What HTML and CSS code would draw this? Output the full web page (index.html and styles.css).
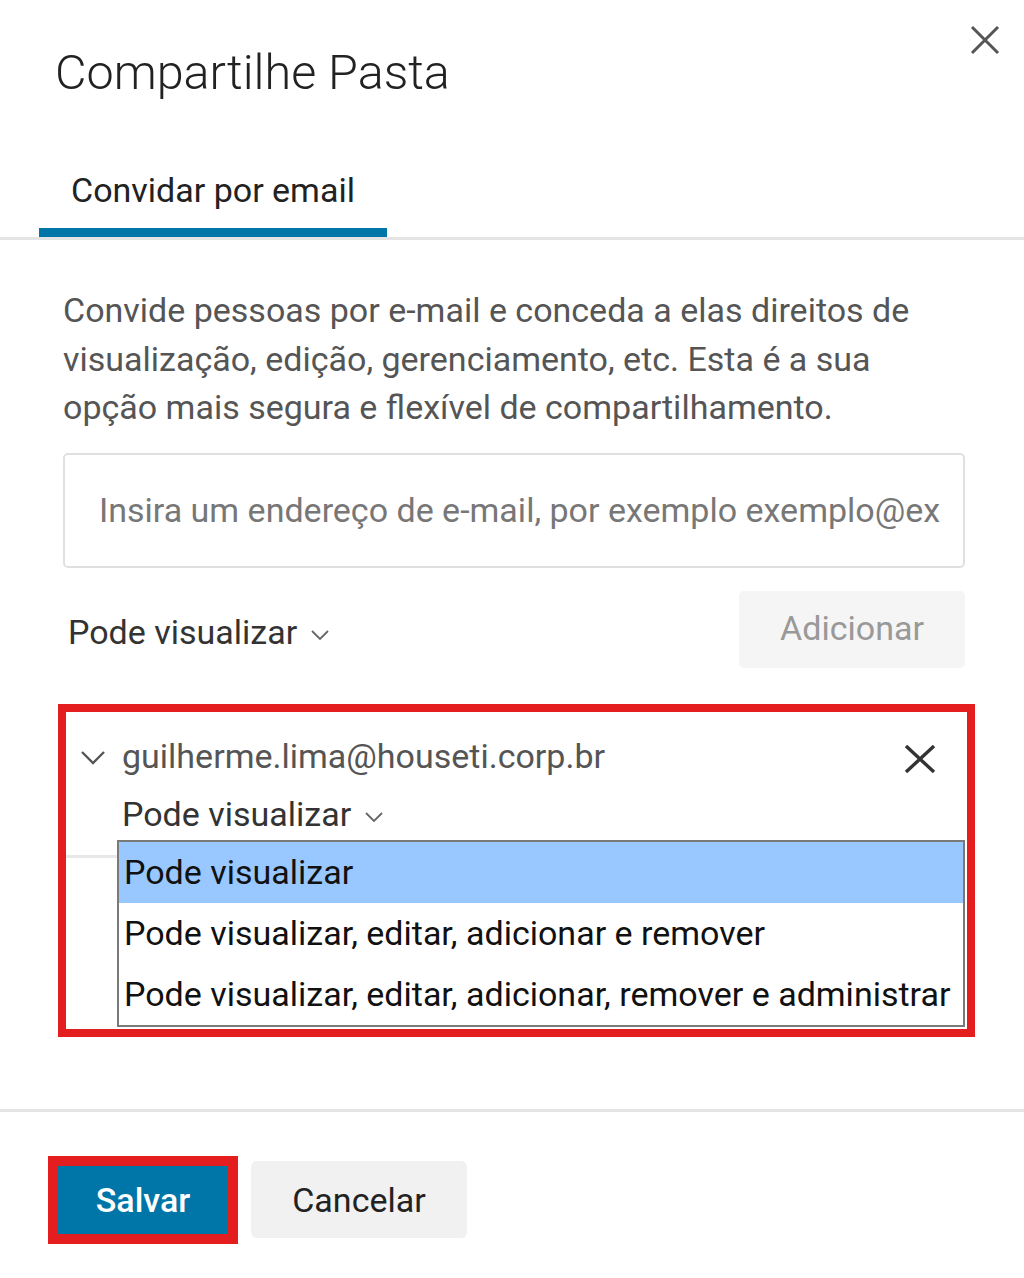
FILE: index.html
```html
<!DOCTYPE html>
<html lang="pt-BR">
<head>
<meta charset="utf-8">
<title>Compartilhe Pasta</title>
<link rel="stylesheet" href="styles.css">
</head>
<body>
<div class="dialog">
  <header class="dialog-header">
    <h1 class="dialog-title">Compartilhe Pasta</h1>
    <button class="close-btn" aria-label="Fechar">
      <svg width="30" height="30" viewBox="0 0 30 30"><path d="M2 2 L28 28 M28 2 L2 28" stroke="#555" stroke-width="3" fill="none"/></svg>
    </button>
  </header>

  <nav class="tabs">
    <div class="tab active">Convidar por email</div>
  </nav>

  <section class="dialog-body">
    <p class="intro">Convide pessoas por e-mail e conceda a elas direitos de visualização, edição, gerenciamento, etc. Esta é a sua opção mais segura e flexível de compartilhamento.</p>

    <div class="email-input">Insira um endereço de e-mail, por exemplo exemplo@ex</div>

    <div class="add-row">
      <div class="perm-select">Pode visualizar
        <svg class="chev-sm" width="20" height="12" viewBox="0 0 20 12"><path d="M2 2 L10 10 L18 2" stroke="#666" stroke-width="1.8" fill="none"/></svg>
      </div>
      <button class="add-btn">Adicionar</button>
    </div>
  </section>

  <div class="share-list">
    <div class="share-item">
      <div class="share-head">
        <svg class="chev-lg" width="26" height="15" viewBox="0 0 26 15"><path d="M2 2 L13 13 L24 2" stroke="#555" stroke-width="2.4" fill="none"/></svg>
        <span class="share-email">guilherme.lima@houseti.corp.br</span>
        <svg class="remove-x" width="32" height="28" viewBox="0 0 32 28"><path d="M2 1 L30 27 M30 1 L2 27" stroke="#333" stroke-width="3.4" fill="none"/></svg>
      </div>
      <div class="share-perm">Pode visualizar
        <svg class="chev-sm" width="20" height="12" viewBox="0 0 20 12"><path d="M2 2 L10 10 L18 2" stroke="#666" stroke-width="1.8" fill="none"/></svg>
      </div>
    </div>
    <ul class="dropdown">
      <li class="selected">Pode visualizar</li>
      <li>Pode visualizar, editar, adicionar e remover</li>
      <li>Pode visualizar, editar, adicionar, remover e administrar</li>
    </ul>
  </div>

  <footer class="dialog-footer">
    <div class="save-wrap"><button class="save-btn">Salvar</button></div>
    <button class="cancel-btn">Cancelar</button>
  </footer>
</div>
</body>
</html>
```

FILE: styles.css
```css
* { box-sizing: border-box; }
html, body { margin: 0; padding: 0; background: #fff; }
body { font-family: Roboto, "Liberation Sans", Arial, sans-serif; color: #333; width: 1024px; height: 1278px; overflow: hidden; }

.dialog { width: 1024px; }

.dialog-header {
  display: flex;
  justify-content: space-between;
  align-items: flex-start;
  padding: 25px 24px 0 55px;
  height: 138px;
}
.dialog-title {
  margin: 22px 0 0;
  font-size: 48.5px;
  font-weight: 300;
  line-height: 52px;
  color: #222;
}
.close-btn {
  border: 0;
  background: none;
  padding: 0;
  width: 30px;
  height: 30px;
}
.close-btn svg { display: block; }

.tabs {
  display: flex;
  padding-left: 39px;
  border-bottom: 3px solid #e4e4e4;
}
.tab {
  padding: 32px 32px 18px 32px;
  font-size: 34px;
  line-height: 40px;
  color: #222;
  border-bottom: 9px solid #0076a8;
}

.dialog-body { padding: 46px 59px 0 63px; }
.intro {
  margin: 0;
  font-size: 34px;
  line-height: 48.5px;
  color: #555;
}
.email-input {
  margin-top: 21px;
  height: 115px;
  border: 2px solid #e0e0e0;
  border-radius: 5px;
  padding-left: 34px;
  display: flex;
  align-items: center;
  font-size: 34px;
  color: #777;
  white-space: nowrap;
  overflow: hidden;
}

.add-row {
  display: flex;
  justify-content: space-between;
  align-items: center;
  margin-top: 23px;
}
.perm-select {
  padding-left: 5px;
  font-size: 34px;
  color: #333;
  display: flex;
  align-items: center;
  gap: 13px;
  margin-top: 6px;
}
.chev-sm { display: block; margin-top: 6px; }
.add-btn {
  width: 226px;
  height: 77px;
  border: 0;
  border-radius: 5px;
  background: #f5f5f5;
  color: #999;
  font-family: inherit;
  font-size: 34px;
  padding-bottom: 4px;
}

.share-list {
  position: relative;
  margin: 36px 49px 0 58px;
  border: 8px solid #e41d1f;
  height: 333px;
}
.share-item {
  border-bottom: 3px solid #e8e8e8;
  height: 146px;
  width: 52px;
  padding: 0;
  overflow: visible;
}
.share-head {
  display: flex;
  align-items: center;
  width: 900px;
  padding: 24px 30px 0 14px;
}
.chev-lg { display: block; flex: none; margin-top: 4px; }
.share-email {
  margin-left: 16px;
  font-size: 34px;
  line-height: 40px;
  color: #555;
  flex: 1;
}
.remove-x { display: block; flex: none; margin-top: 6px; }
.share-perm {
  margin: 18px 0 0 56px;
  width: 400px;
  font-size: 34px;
  line-height: 40px;
  color: #333;
  display: flex;
  align-items: center;
  gap: 13px;
}

.dropdown {
  position: absolute;
  left: 51px;
  top: 128px;
  right: 2px;
  margin: 0;
  padding: 0;
  list-style: none;
  border: 2px solid #7a7a7a;
  background: #fff;
}
.dropdown li {
  height: 61px;
  display: flex;
  align-items: center;
  padding-left: 5px;
  font-size: 34px;
  color: #111;
  white-space: nowrap;
}
.dropdown li.selected { background: #99c7ff; }

.dialog-footer {
  margin-top: 72px;
  border-top: 3px solid #e4e4e4;
  padding: 44px 0 0 48px;
  display: flex;
  align-items: center;
  gap: 13px;
}
.save-wrap {
  border: 10px solid #e41d1f;
}
.save-btn {
  display: block;
  width: 170px;
  height: 68px;
  border: 0;
  background: #0075a8;
  color: #fff;
  font-family: inherit;
  font-size: 34px;
  font-weight: 500;
}
.cancel-btn {
  width: 216px;
  height: 77px;
  border: 0;
  border-radius: 6px;
  background: #f1f1f1;
  color: #222;
  font-family: inherit;
  font-size: 34px;
}
```
